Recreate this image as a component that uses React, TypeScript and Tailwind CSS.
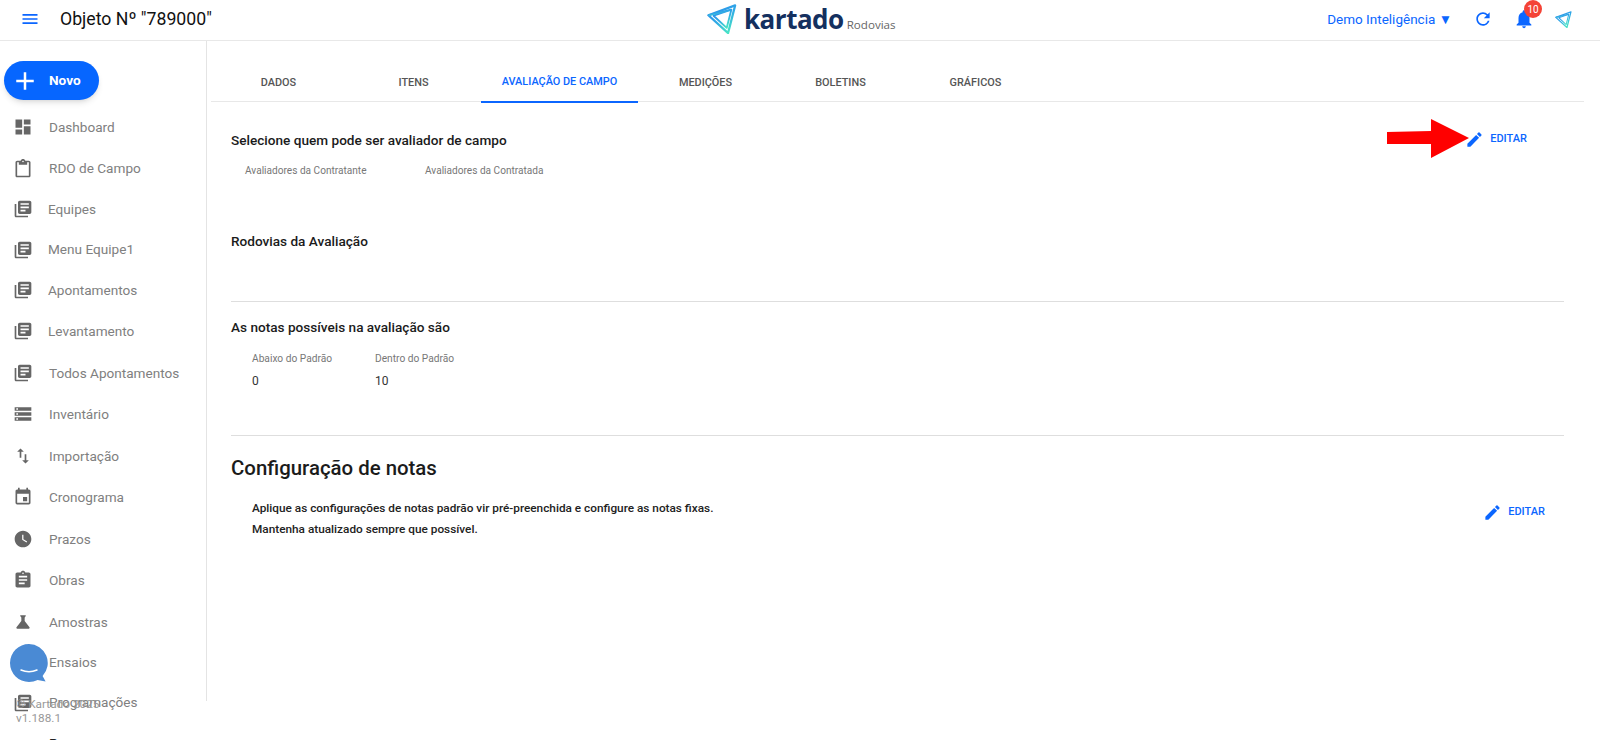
import {
  MdAdd,
  MdAssignment,
  MdDashboard,
  MdEdit,
  MdEvent,
  MdImportExport,
  MdLibraryBooks,
  MdMenu,
  MdNotifications,
  MdOutlineContentPaste,
  MdRefresh,
  MdScience,
  MdStorage,
  MdWatchLater,
} from "react-icons/md";

// row heights are not quite even in the original sidebar
const menuItems = [
  { label: "Dashboard", icon: MdDashboard, row: "h-[42px]", gap: "ml-[16px]" },
  { label: "RDO de Campo", icon: MdOutlineContentPaste, row: "h-[41px]", gap: "ml-[16px]" },
  { label: "Equipes", icon: MdLibraryBooks, row: "h-[40.4px]", gap: "ml-[15px]" },
  { label: "Menu Equipe1", icon: MdLibraryBooks, row: "h-[40.4px]", gap: "ml-[15px]" },
  { label: "Apontamentos", icon: MdLibraryBooks, row: "h-[40.4px]", gap: "ml-[15px]" },
  { label: "Levantamento", icon: MdLibraryBooks, row: "h-[41.9px]", gap: "ml-[15px]" },
  { label: "Todos Apontamentos", icon: MdLibraryBooks, row: "h-[41.5px]", gap: "ml-[16px]" },
  { label: "Inventário", icon: MdStorage, row: "h-[41.5px]", gap: "ml-[16px]" },
  { label: "Importação", icon: MdImportExport, row: "h-[41.5px]", gap: "ml-[16px]" },
  { label: "Cronograma", icon: MdEvent, row: "h-[41.5px]", gap: "ml-[16px]" },
  { label: "Prazos", icon: MdWatchLater, row: "h-[41.5px]", gap: "ml-[16px]" },
  { label: "Obras", icon: MdAssignment, row: "h-[41.5px]", gap: "ml-[16px]" },
  { label: "Amostras", icon: MdScience, row: "h-[41.5px]", gap: "ml-[16px]" },
  { label: "Ensaios", icon: MdScience, row: "h-[40px]", gap: "ml-[16px]" },
  { label: "Programações", icon: MdLibraryBooks, row: "h-[40px]", gap: "ml-[16px]" },
];

const tabs = ["DADOS", "ITENS", "AVALIAÇÃO DE CAMPO", "MEDIÇÕES", "BOLETINS", "GRÁFICOS"];

function LogoMark({ size, id }: { size: number; id: string }) {
  return (
    <svg width={size} height={size} viewBox="0 0 32 32" fill="none">
      <defs>
        <linearGradient id={id} x1="0" y1="0" x2="0.7" y2="1">
          <stop offset="0" stopColor="#2a86ee" />
          <stop offset="0.55" stopColor="#2fa8e6" />
          <stop offset="1" stopColor="#48e3c6" />
        </linearGradient>
      </defs>
      <path d="M1.500 12 30 1.500 22.500 31Z" stroke={`url(#${id})`} strokeWidth="2.400" strokeLinejoin="round" />
      <path d="M7 12.500 26 6 21 25.500Z" stroke={`url(#${id})`} strokeWidth="2" strokeLinejoin="round" />
      <path d="M1.500 12 26 6" stroke={`url(#${id})`} strokeWidth="2" />
    </svg>
  );
}

function EditButton({ className }: { className: string }) {
  return (
    <button className={`flex items-center gap-[6px] text-[#0b66ff] ${className}`}>
      <MdEdit size={19} />
      <span className="text-[11px] font-medium">EDITAR</span>
    </button>
  );
}

export default function App() {
  return (
    <div className="relative flex h-[740px] w-[1600px] flex-col overflow-hidden bg-white font-['Roboto',sans-serif]">
      <header className="flex h-[41px] shrink-0 items-center border-b border-[#e8e8e8] pr-[28px] pb-[2px] pl-[20px]">
        <MdMenu size={20} className="text-[#0b66ff]" />
        <h1 className="ml-[20px] w-[152px] text-[17.700px] whitespace-nowrap text-[#111]">Objeto Nº "789000"</h1>
        <div className="ml-[495px] flex items-center">
          <LogoMark size={30} id="logo-big" />
          <span className="ml-[7px] font-['Open_Sans',sans-serif] text-[26px] leading-none font-bold tracking-[-0.5px] text-[#14305f]">
            kartado
          </span>
          <span className="mt-[11px] ml-[3px] font-['Open_Sans',sans-serif] text-[11.600px] text-[#666]">Rodovias</span>
        </div>
        <div className="ml-auto flex items-center text-[#0b66ff]">
          <span className="text-[13.500px]">Demo Inteligência ▼</span>
          <MdRefresh size={20} className="ml-[21px]" />
          <div className="relative ml-[20px]">
            <MdNotifications size={22} />
            <span className="absolute -top-[8px] left-[11px] flex h-[18px] w-[18px] items-center justify-center rounded-full bg-[#f44336] text-[10px] text-white">
              10
            </span>
          </div>
          <div className="ml-[20px]">
            <LogoMark size={17} id="logo-small" />
          </div>
        </div>
      </header>

      <div className="flex min-h-0 flex-1">
        <aside className="relative h-[660px] w-[207px] shrink-0 border-r border-[#e4e4e4]">
          <button className="mt-[20px] ml-[4px] flex h-[39px] w-[95px] items-center rounded-full bg-[#0666ff] pl-[6px] text-white shadow-md">
            <MdAdd size={30} />
            <span className="mb-[1px] ml-[9px] text-[13.600px] font-bold">Novo</span>
          </button>
          <nav className="mt-[6px] flex flex-col">
            {menuItems.map(({ label, icon: Icon, row, gap }) => (
              <div key={label} className={`flex shrink-0 items-center pl-[13px] text-[13.600px] whitespace-nowrap text-[#808080] ${row}`}>
                <Icon size={20} className="shrink-0 text-[#666]" />
                <span className={gap}>{label}</span>
              </div>
            ))}
            <div className="mt-[10px] pl-[49px] text-[13.600px] text-[#222]">Pr</div>
          </nav>
        </aside>

        <main className="min-w-0 flex-1 pr-[16px] pl-[5px]">
          <nav className="mt-[21px] -ml-[1px] flex h-[40px] border-b border-[#e8e8e8]">
            {tabs.map((tab) => {
              const active = tab === "AVALIAÇÃO DE CAMPO";
              return (
                <div
                  key={tab}
                  className={`flex h-[41px] items-center justify-center pt-[1px] text-[10.900px] font-medium ${
                    active ? "w-[157px] border-b-2 border-[#0b66ff] text-[#0b66ff]" : "w-[135px] text-[#555]"
                  }`}
                >
                  {tab}
                </div>
              );
            })}
          </nav>

          <div className="pr-[20px] pl-[19px]">
            <section className="relative h-[200px] border-b border-[#dedede] pt-[28px]">
              <h2 className="text-[13.600px] leading-[20px] font-medium text-[#1b1b1b]">Selecione quem pode ser avaliador de campo</h2>
              <div className="mt-[13px] flex pl-[14px] text-[10.100px] text-[#777]">
                <span className="w-[180px]">Avaliadores da Contratante</span>
                <span>Avaliadores da Contratada</span>
              </div>
              <h2 className="mt-[53px] text-[13.600px] leading-[20px] font-medium text-[#1b1b1b]">Rodovias da Avaliação</h2>
              <EditButton className="absolute top-[28px] right-[37px]" />
            </section>

            <section className="h-[134px] border-b border-[#dedede] pt-[15px]">
              <h2 className="text-[13.600px] leading-[20px] font-medium text-[#1b1b1b]">As notas possíveis na avaliação são</h2>
              <div className="mt-[14px] flex pl-[21px]">
                <div className="w-[123px]">
                  <div className="text-[10.200px] text-[#777]">Abaixo do Padrão</div>
                  <div className="mt-[6px] text-[12px] text-[#333]">0</div>
                </div>
                <div>
                  <div className="text-[10.200px] text-[#777]">Dentro do Padrão</div>
                  <div className="mt-[6px] text-[12px] text-[#333]">10</div>
                </div>
              </div>
            </section>

            <section className="relative pt-[18px]">
              <h2 className="text-[20.400px] leading-[28px] font-medium text-[#1b1b1b]">Configuração de notas</h2>
              <div className="mt-[16px] pl-[21px] text-[11.800px] leading-[21px] font-medium text-[#222]">
                <p>Aplique as configurações de notas padrão vir pré-preenchida e configure as notas fixas.</p>
                <p>Mantenha atualizado sempre que possível.</p>
              </div>
              <EditButton className="absolute top-[67px] right-[19px]" />
            </section>
          </div>
        </main>
      </div>

      {/* red arrow pointing at the first edit button */}
      <svg className="absolute top-[119px] left-[1387px]" width="84" height="40" viewBox="0 0 84 40">
        <path d="M0 13 44 12 44 0 82 19 44 39 44 25 0 25Z" fill="#ff0000" />
      </svg>

      {/* chat bubble */}
      <svg className="absolute top-[643px] left-[9px]" width="40" height="40" viewBox="0 0 40 40">
        <path d="M20 1a19 19 0 1 0 0 38c3 0 6-.7 8.600-2l8 1.500-3-5.500A19 19 0 0 0 20 1Z" fill="#4a8ad4" />
        <path d="M12 27q8 3.500 16 0" stroke="#fff" strokeWidth="1.500" fill="none" strokeLinecap="round" />
      </svg>

      <div className="absolute top-[697px] left-[16px] text-[11.800px] leading-[14px] text-[#999]">
        <div>© Kartado 2025</div>
        <div>v1.188.1</div>
      </div>
    </div>
  );
}
